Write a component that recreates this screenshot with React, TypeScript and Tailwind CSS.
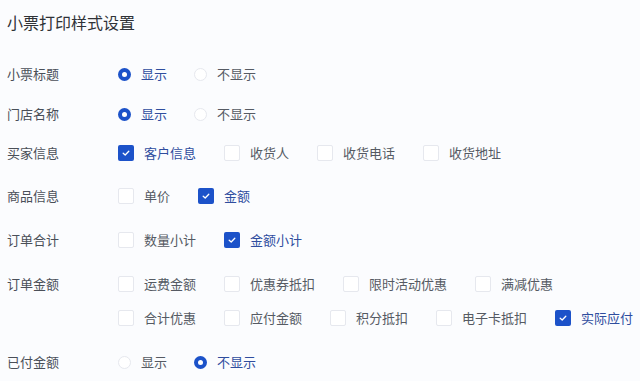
import React from "react";

const font = { fontFamily: '"Noto Sans CJK SC", "Noto Sans", sans-serif' };

function Radio({ label, checked }: { label: string; checked?: boolean }) {
  return (
    <div className="flex items-center mr-[27px] shrink-0 whitespace-nowrap">
      {checked ? (
        <span className="w-[13px] h-[13px] rounded-full bg-[#1c52c9] flex items-center justify-center">
          <span className="w-[5px] h-[5px] rounded-full bg-white" />
        </span>
      ) : (
        <span className="w-[13px] h-[13px] rounded-full bg-white border border-[#e6e8ee]" />
      )}
      <span className={`ml-[10px] text-[13px] leading-[20px] ${checked ? "text-[#2f4d9e]" : "text-[#555a63]"}`}>{label}</span>
    </div>
  );
}

function Check({ label, checked }: { label: string; checked?: boolean }) {
  return (
    <div className="flex items-center mr-[28px] shrink-0 whitespace-nowrap">
      {checked ? (
        <span className="w-[16px] h-[16px] rounded-[2px] bg-[#1c52c9] flex items-center justify-center">
          <svg width="10" height="10" viewBox="0 0 10 10" fill="none">
            <path d="M2.2 5.2 L4.2 7 L7.8 3.2" stroke="white" strokeWidth="1.3" strokeLinecap="round" strokeLinejoin="round" />
          </svg>
        </span>
      ) : (
        <span className="w-[16px] h-[16px] rounded-[2px] bg-white border border-[#e6e8ee]" />
      )}
      <span className={`ml-[10px] text-[13px] leading-[20px] ${checked ? "text-[#2f4d9e]" : "text-[#555a63]"}`}>{label}</span>
    </div>
  );
}

function Row({ label, mt, children }: { label: string; mt: string; children: React.ReactNode }) {
  return (
    <div className={`flex ${mt}`}>
      <div className="w-[111px] shrink-0 text-[13px] leading-[20px] text-[#4a4f58] whitespace-nowrap">{label}</div>
      <div className="flex flex-col gap-[14px] shrink-0">{children}</div>
    </div>
  );
}

export default function App() {
  return (
    <div className="w-[640px] h-[381px] bg-[#fbfcfe] pl-[7px] overflow-hidden" style={font}>
      <div className="h-[44px] flex items-center text-[16px] text-[#2f3237]">小票打印样式设置</div>
      <Row label="小票标题" mt="mt-[20px]">
        <div className="flex"><Radio label="显示" checked /><Radio label="不显示" /></div>
      </Row>
      <Row label="门店名称" mt="mt-[20px]">
        <div className="flex"><Radio label="显示" checked /><Radio label="不显示" /></div>
      </Row>
      <Row label="买家信息" mt="mt-[19px]">
        <div className="flex">
          <Check label="客户信息" checked />
          <Check label="收货人" />
          <Check label="收货电话" />
          <Check label="收货地址" />
        </div>
      </Row>
      <Row label="商品信息" mt="mt-[23px]">
        <div className="flex"><Check label="单价" /><Check label="金额" checked /></div>
      </Row>
      <Row label="订单合计" mt="mt-[24px]">
        <div className="flex"><Check label="数量小计" /><Check label="金额小计" checked /></div>
      </Row>
      <Row label="订单金额" mt="mt-[24px]">
        <div className="flex">
          <Check label="运费金额" />
          <Check label="优惠券抵扣" />
          <Check label="限时活动优惠" />
          <Check label="满减优惠" />
        </div>
        <div className="flex">
          <Check label="合计优惠" />
          <Check label="应付金额" />
          <Check label="积分抵扣" />
          <Check label="电子卡抵扣" />
          <Check label="实际应付" checked />
        </div>
      </Row>
      <Row label="已付金额" mt="mt-[24px]">
        <div className="flex"><Radio label="显示" /><Radio label="不显示" checked /></div>
      </Row>
    </div>
  );
}
